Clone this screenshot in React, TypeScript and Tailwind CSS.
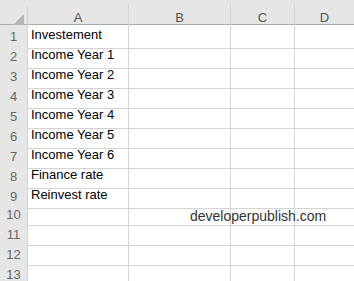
const cols = ["A", "B", "C", "D"];
const labels = [
  "Investement",
  "Income Year 1",
  "Income Year 2",
  "Income Year 3",
  "Income Year 4",
  "Income Year 5",
  "Income Year 6",
  "Finance rate",
  "Reinvest rate",
  "",
  "",
  "",
  "",
];

export default function App() {
  return (
    <div className="w-[354px] h-[281px] overflow-hidden bg-white font-['Liberation_Sans',Arial,sans-serif]">
      {/* column headers */}
      <div className="grid grid-cols-[28px_101px_102px_64px_1fr] h-[25px] bg-[#e6e6e6] border-b border-[#ababab]">
        <div className="relative border-r border-[#d0d0d0] mt-[6px]">
          <div className="absolute right-[3px] bottom-[3px] w-0 h-0 border-l-[11px] border-l-transparent border-b-[11px] border-b-[#b4b4b4]" />
        </div>
        {cols.map((c) => (
          <div
            key={c}
            className="flex items-center justify-center pt-[4px] text-[13px] text-[#555] border-r border-[#d4d4d4] mt-[4px] last:border-r-0"
          >
            {c}
          </div>
        ))}
      </div>

      {/* rows */}
      {labels.map((label, i) => (
        <div key={i} className="grid grid-cols-[28px_101px_102px_64px_1fr] h-[20px]">
          <div className="flex items-center justify-center text-[13px] text-[#666] bg-[#e6e6e6] border-r border-b border-[#d4d4d4]">
            {i + 1}
          </div>
          <div className="flex items-end pb-[3px] pl-[3px] text-[13px] text-black border-r border-b border-[#d4d4d4] whitespace-nowrap">
            {label}
          </div>
          <div className="relative border-r border-b border-[#d4d4d4]">
            {i === 9 && (
              <span className="absolute left-[61px] top-[1px] text-[14px] text-[#333] whitespace-nowrap">
                developerpublish.com
              </span>
            )}
          </div>
          <div className="border-r border-b border-[#d4d4d4]" />
          <div className="border-b border-[#d4d4d4]" />
        </div>
      ))}
    </div>
  );
}
